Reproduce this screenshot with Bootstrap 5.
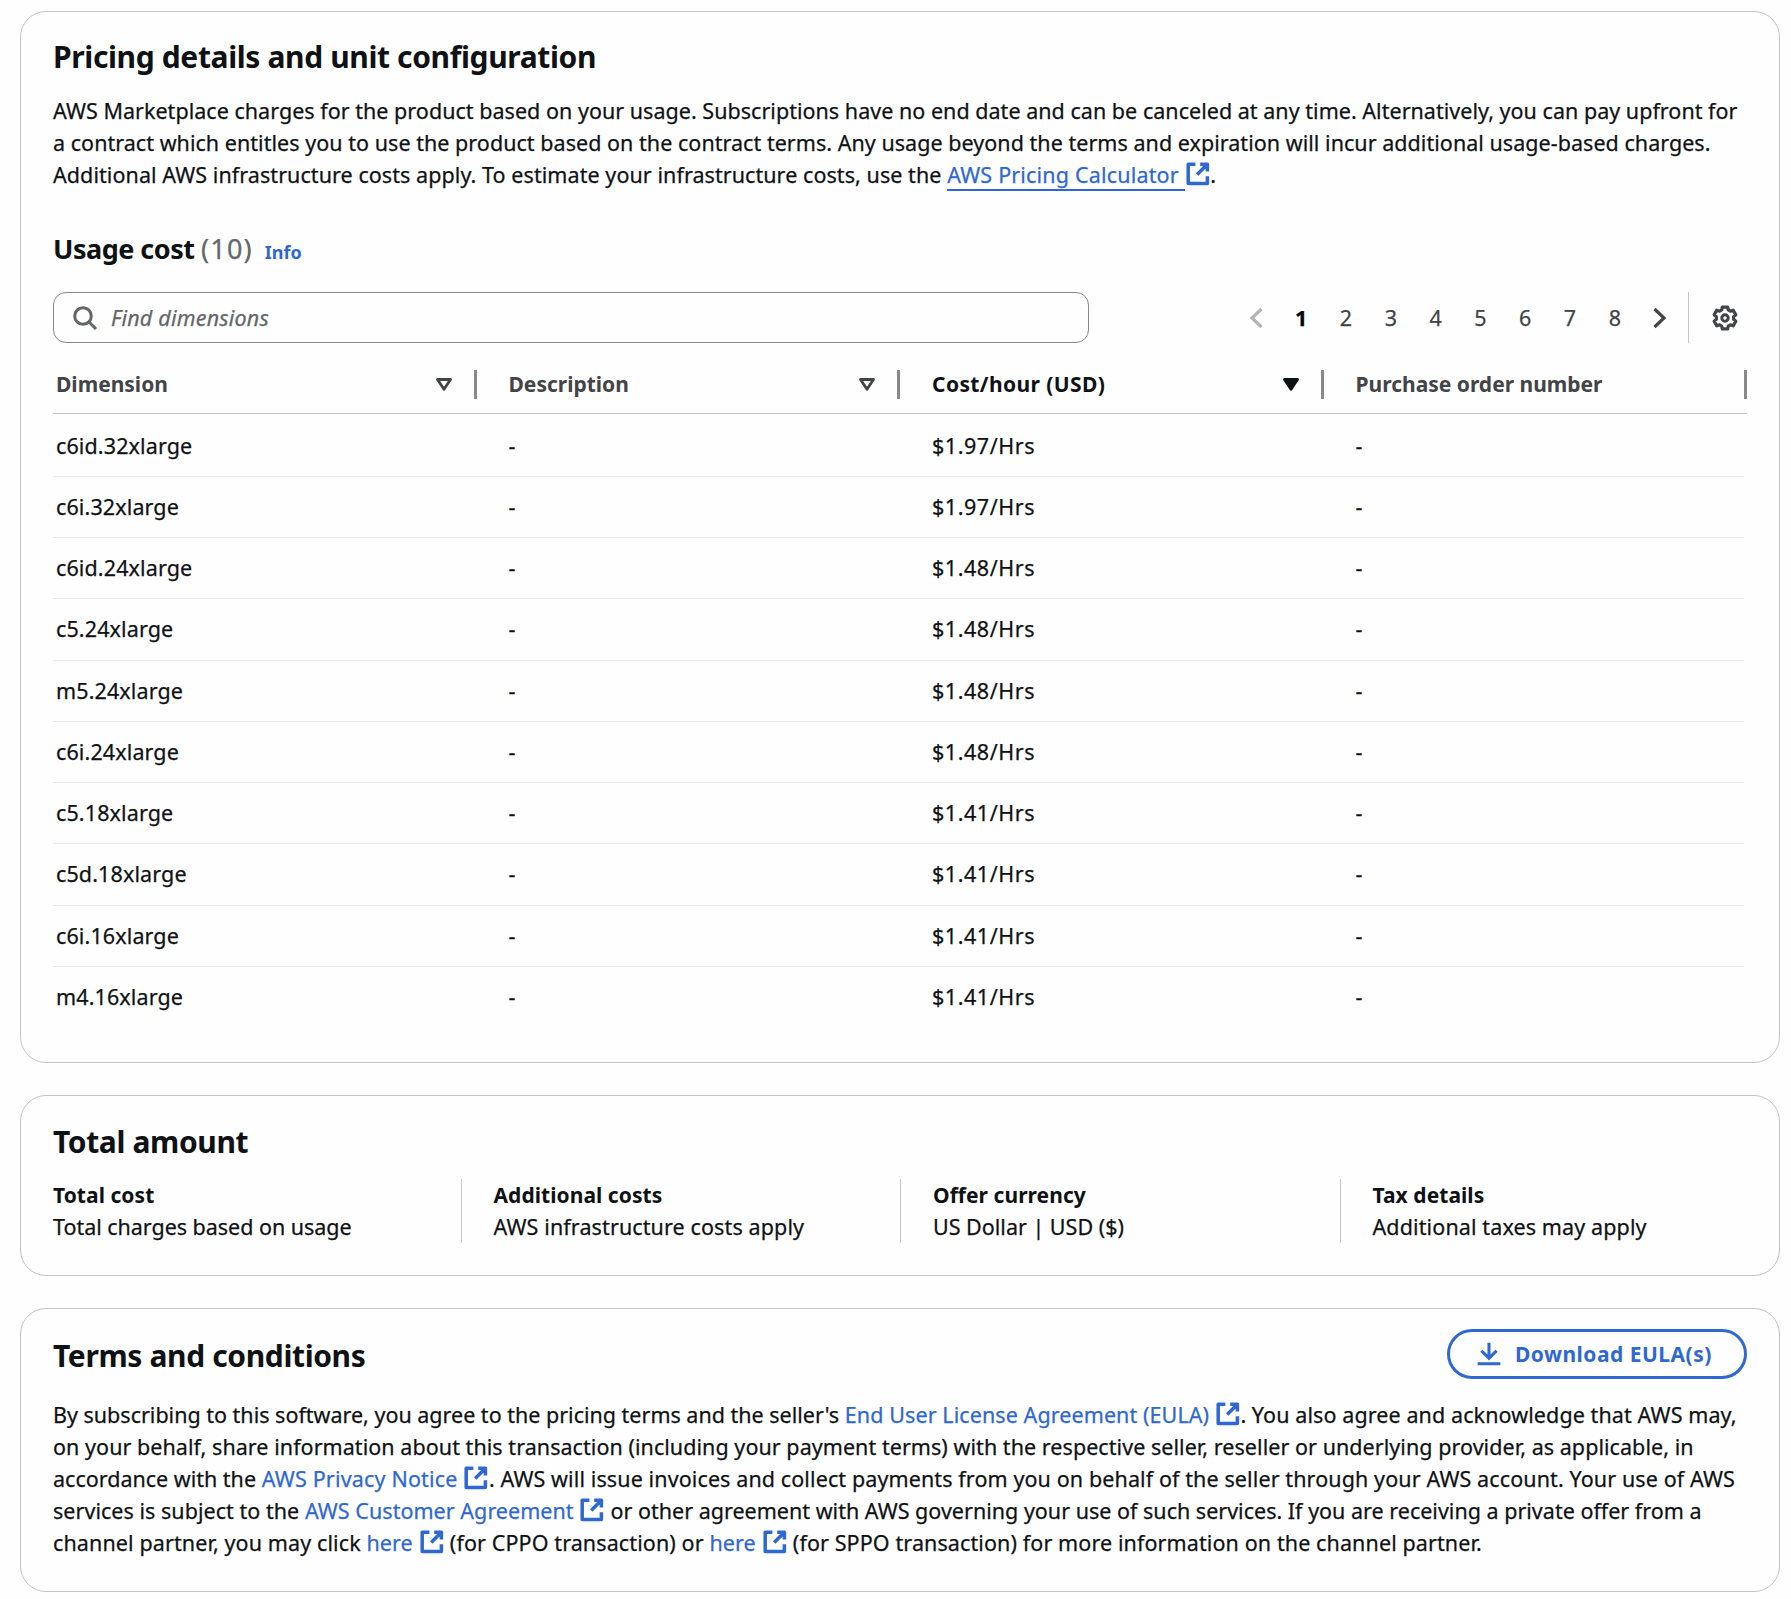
<!DOCTYPE html>
<html lang="en">
<head>
<meta charset="utf-8">
<meta name="viewport" content="width=device-width, initial-scale=1">
<title>Pricing details and unit configuration</title>
<link href="https://cdn.jsdelivr.net/npm/bootstrap@5.3.0/dist/css/bootstrap.min.css" rel="stylesheet">
<style>
  :root { --ink: #0f1215; --muted: #656669; --head: #424447; --link: #2f68d1; --line: #c4c5c7; }
  body { font-family: "Noto Sans", "Open Sans", sans-serif; font-size: 21.5px; line-height: 32px; letter-spacing: .04px; color: var(--ink); background: #fefefe; overflow: hidden; -webkit-text-stroke: .25px; }
  .page { width: 1760px; margin: 11px 0 0 20px; gap: 32px; }
  .panel { border: 1px solid var(--line); border-radius: 26px; background: #fefefe; padding: 0 32px; }
  .panel-pricing { height: 1052px; padding-top: 25px; }
  .panel-total { height: 181px; padding: 26px 0 0; }
  .panel-terms { height: 284px; padding-top: 20px; }
  h2 { font-size: 30px; line-height: 40px; font-weight: 700; letter-spacing: -.37px; margin: 0; }
  h3 { font-size: 27px; line-height: 36px; font-weight: 700; letter-spacing: -.5px; margin: 0; }
  h2, h3, b, th { -webkit-text-stroke: 0; }
  .counter { font-weight: 400; color: var(--muted); letter-spacing: 1.2px; -webkit-text-stroke: .25px; }
  .info { font-size: 18px; font-weight: 700; letter-spacing: 0; -webkit-text-stroke: 0; }
  a { color: var(--link); text-decoration: none; }
  .lined { border-bottom: 2px solid var(--link); }
  .copy { white-space: nowrap; margin: 0; }
  .ext { width: 25.6px; height: 25.6px; fill: none; stroke: var(--link); stroke-width: 2.2; vertical-align: -4px; }
  .search { width: 1036px; height: 51px; border: 1.4px solid #88898c; border-radius: 13px; padding-left: 18px; color: var(--muted); }
  .search input { border: 0; outline: 0; background: none; padding: 0; margin-left: 13px; font-size: 21.5px; letter-spacing: .2px; font-style: italic; flex: 1; }
  .search input::placeholder { color: var(--muted); opacity: 1; }
  .pages > * { width: 44.8px; text-align: center; color: var(--head); display: flex; justify-content: center; align-items: center; }
  .pages .current { font-weight: 700; color: #000; }
  .rule { width: 1px; height: 51px; background: var(--line); margin: 0 23px 0 6px; }
  .grid { table-layout: fixed; width: 1694px; border-collapse: separate; border-spacing: 0; }
  .grid th { height: 71px; padding: 25px 0 0 32px; vertical-align: top; border-bottom: 1.4px solid #bfc0c2; font-size: 21px; font-weight: 700; letter-spacing: 0; color: var(--head); }
  .grid th.sorted { color: var(--ink); letter-spacing: .4px; }
  .grid td { height: 61px; padding: 14px 0 0 32px; vertical-align: top; letter-spacing: .12px; background: linear-gradient(#e9e9eb, #e9e9eb) left bottom / 100% 1px no-repeat; }
  .grid td:last-child { background-size: calc(100% - 3px) 1px; }
  .grid tr:first-child td { height: 63px; padding-top: 16px; }
  .grid tr:nth-child(4n) td { height: 62px; }
  .grid tr:last-child td { background: none; }
  .grid th:first-child, .grid td:first-child { padding-left: 3px; }
  .grid td:nth-child(3) { letter-spacing: .55px; }
  .grip { width: 3px; height: 29px; background: #88898b; margin-top: 2px; }
  .tri { width: 18px; height: 15px; margin: 0 21px 0 auto; stroke-linejoin: round; }
  .facts > div { padding-left: 32px; height: 64px; letter-spacing: .12px; white-space: nowrap; }
  .facts > div + div { border-left: 1px solid var(--line); }
  .facts b { display: block; font-size: 21px; letter-spacing: .05px; }
  .btn-eula { width: 300px; height: 50px; border: 3px solid var(--link); border-radius: 25px; color: var(--link); font-size: 21px; font-weight: 700; letter-spacing: .48px; padding: 0 0 0 26px; line-height: 32px; gap: 13px; -webkit-text-stroke: 0; }
</style>
</head>
<body>
<svg class="d-none"><symbol id="ext" viewBox="0 0 16 16"><path d="M14 9.5V14H2V2h4.5M9.5 2H14v4.5M14 2 7.6 8.4" stroke-linejoin="round"/></symbol>
<symbol id="tri" viewBox="0 0 18 15"><path d="M2.5 2.5h13L9 12.3Z" stroke-width="2.8"/></symbol></svg>
<main class="page d-flex flex-column">
  <section class="panel panel-pricing">
    <h2>Pricing details and unit configuration</h2>
    <p class="copy" style="margin-top:18px"><span style="letter-spacing:.03px">AWS Marketplace charges for the product based on your usage. Subscriptions have no end date and can be canceled at any time. Alternatively, you can pay upfront for</span><br>a contract which entitles you to use the product based on the contract terms. Any usage beyond the terms and expiration will incur additional usage-based charges.<br><span style="letter-spacing:.07px">Additional AWS infrastructure costs apply. To estimate your infrastructure costs, use the</span> <a href="#"><span class="lined" style="letter-spacing:.18px">AWS Pricing Calculator </span><svg class="ext"><use href="#ext"/></svg></a>.</p>
    <div class="d-flex align-items-baseline" style="margin-top:40px">
      <h3>Usage cost <span class="counter">(10)</span></h3><a href="#" class="info ms-2 ps-1">Info</a>
    </div>
    <div class="d-flex align-items-center" style="margin-top:24px">
      <label class="search d-flex align-items-center">
        <svg width="26" height="26" viewBox="0 0 26 26" fill="none" stroke="#656669" stroke-width="3"><circle cx="11" cy="11" r="8.3"/><path d="m17 17 7 7"/></svg>
        <input type="text" placeholder="Find dimensions">
      </label>
      <nav class="pages d-flex ms-auto">
        <span><svg width="16" height="24" viewBox="0 0 16 24" fill="none" stroke="#b3b4b6" stroke-width="3.2"><path d="M13.5 3 4 12l9.5 9"/></svg></span>
        <span class="current">1</span><span>2</span><span>3</span><span>4</span><span>5</span><span>6</span><span>7</span><span>8</span>
        <span><svg width="16" height="24" viewBox="0 0 16 24" fill="none" stroke="#424447" stroke-width="3.2"><path d="M2.5 3 12 12l-9.5 9"/></svg></span>
      </nav>
      <div class="rule"></div>
      <svg width="26" height="26" viewBox="-13 -13 26 26" fill="none" stroke="#424447" stroke-width="3.2" stroke-linejoin="round" style="margin-right:9px"><path d="M-3.26-8.07-2.73-10.96H2.73L3.26-8.07 5.36-6.86 8.13-7.85 10.86-3.11 8.62-1.21V1.21L10.86 3.11 8.13 7.85 5.36 6.86 3.26 8.07 2.73 10.96H-2.73L-3.26 8.07-5.36 6.86-8.13 7.85-10.86 3.11-8.62 1.21V-1.21L-10.86-3.11-8.13-7.85-5.36-6.86Z"/><circle r="3.2" stroke-width="3"/></svg>
    </div>
    <table class="grid">
      <thead><tr>
        <th><div class="d-flex"><span>Dimension</span><svg class="tri align-self-center" fill="none" stroke="#424447"><use href="#tri"/></svg><i class="grip"></i></div></th>
        <th><div class="d-flex"><span>Description</span><svg class="tri align-self-center" fill="none" stroke="#424447"><use href="#tri"/></svg><i class="grip"></i></div></th>
        <th class="sorted"><div class="d-flex"><span>Cost/hour (USD)</span><svg class="tri align-self-center" fill="#0f1215" stroke="#0f1215"><use href="#tri"/></svg><i class="grip"></i></div></th>
        <th><div class="d-flex justify-content-between"><span>Purchase order number</span><i class="grip"></i></div></th>
      </tr></thead>
      <tbody>
        <tr><td>c6id.32xlarge</td><td>-</td><td>$1.97/Hrs</td><td>-</td></tr>
        <tr><td>c6i.32xlarge</td><td>-</td><td>$1.97/Hrs</td><td>-</td></tr>
        <tr><td>c6id.24xlarge</td><td>-</td><td>$1.48/Hrs</td><td>-</td></tr>
        <tr><td>c5.24xlarge</td><td>-</td><td>$1.48/Hrs</td><td>-</td></tr>
        <tr><td>m5.24xlarge</td><td>-</td><td>$1.48/Hrs</td><td>-</td></tr>
        <tr><td>c6i.24xlarge</td><td>-</td><td>$1.48/Hrs</td><td>-</td></tr>
        <tr><td>c5.18xlarge</td><td>-</td><td>$1.41/Hrs</td><td>-</td></tr>
        <tr><td>c5d.18xlarge</td><td>-</td><td>$1.41/Hrs</td><td>-</td></tr>
        <tr><td>c6i.16xlarge</td><td>-</td><td>$1.41/Hrs</td><td>-</td></tr>
        <tr><td>m4.16xlarge</td><td>-</td><td>$1.41/Hrs</td><td>-</td></tr>
      </tbody>
    </table>
  </section>

  <section class="panel panel-total">
    <h2 style="padding-left:32px">Total amount</h2>
    <div class="facts row row-cols-4 g-0" style="margin-top:17px">
      <div><b>Total cost</b><span style="letter-spacing:-.03px">Total charges based on usage</span></div>
      <div><b>Additional costs</b>AWS infrastructure costs apply</div>
      <div><b>Offer currency</b><span style="letter-spacing:0">US Dollar | USD ($)</span></div>
      <div><b>Tax details</b>Additional taxes may apply</div>
    </div>
  </section>

  <section class="panel panel-terms">
    <div class="d-flex justify-content-between align-items-center">
      <h2 class="pt-1" style="margin-bottom:1px">Terms and conditions</h2>
      <button type="button" class="btn btn-eula d-flex align-items-center">
        <svg width="26" height="26" viewBox="0 0 16 16" fill="none" stroke="currentColor" stroke-width="1.9"><path d="M8 1v9M3.3 6 8 10.6 12.7 6M1 14h14"/></svg>Download EULA(s)
      </button>
    </div>
    <p class="copy" style="margin-top:20px"><span style="letter-spacing:0">By subscribing to this software, you agree to the pricing terms and the seller's</span> <a href="#" style="letter-spacing:.09px">End User License Agreement (EULA) <svg class="ext"><use href="#ext"/></svg></a>. <span style="letter-spacing:.1px">You also agree and acknowledge that AWS may,</span><br>
    <span style="letter-spacing:.055px">on your behalf, share information about this transaction (including your payment terms) with the respective seller, reseller or underlying provider, as applicable, in</span><br>
    <span style="letter-spacing:0">accordance with the</span> <a href="#" style="letter-spacing:.18px">AWS Privacy Notice <svg class="ext"><use href="#ext"/></svg></a>. <span style="letter-spacing:.11px">AWS will issue invoices and collect payments from you on behalf of the seller through your AWS account. Your use of AWS</span><br>
    services is subject to the <a href="#">AWS Customer Agreement <svg class="ext"><use href="#ext"/></svg></a> <span style="letter-spacing:.01px">or other agreement with AWS governing your use of such services. If you are receiving a private offer from a</span><br>
    <span style="letter-spacing:.11px">channel partner, you may click <a href="#">here <svg class="ext"><use href="#ext"/></svg></a> (for CPPO transaction) or <a href="#">here <svg class="ext"><use href="#ext"/></svg></a> (for SPPO transaction) for more information on the channel partner.</span></p>
  </section>
</main>
<script src="https://cdn.jsdelivr.net/npm/bootstrap@5.3.0/dist/js/bootstrap.bundle.min.js"></script>
</body>
</html>
